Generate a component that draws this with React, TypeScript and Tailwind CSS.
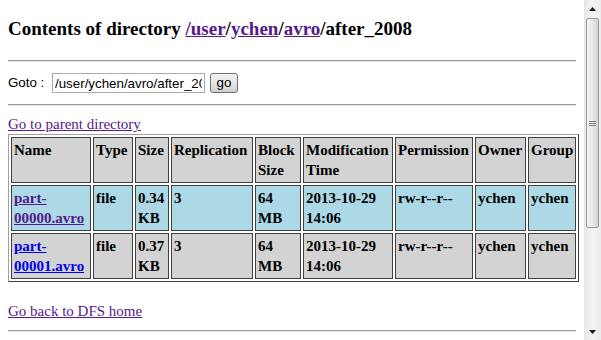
import { Fragment } from 'react'

const columns = [
  'Name',
  'Type',
  'Size',
  'Replication',
  'Block Size',
  'Modification Time',
  'Permission',
  'Owner',
  'Group',
]

const files = [
  {
    name: 'part-00000.avro',
    size: '0.34 KB',
    visited: true,
    bg: 'bg-[#add8e6]',
  },
  {
    name: 'part-00001.avro',
    size: '0.37 KB',
    visited: false,
    bg: 'bg-[#d3d3d3]',
  },
]

function Rule({ className = '' }: { className?: string }) {
  return (
    <div className={`h-[2px] border-t border-b border-t-[#9a9a9a] border-b-[#e4e4e4] ${className}`} />
  )
}

function Cell({ bg, children }: { bg: string; children: React.ReactNode }) {
  return (
    <div className={`${bg} border border-[#404040] p-[2px] text-[15px] leading-[20px] font-bold text-black`}>
      {children}
    </div>
  )
}

function Scrollbar() {
  return (
    <div className="w-[17px] h-[340px] shrink-0 flex flex-col bg-gradient-to-r from-[#e6e6e6] via-[#f4f4f4] to-[#ececec]">
      <div className="h-[17px] flex items-center justify-center">
        <svg width="7" height="4" viewBox="0 0 7 4">
          <path d="M3.5 0 L7 4 L0 4 Z" fill="#1a1a1a" />
        </svg>
      </div>
      <div className="mx-[2px] mt-[1px] h-[210px] rounded-[2px] border border-[#9b9b9b] bg-gradient-to-r from-[#f4f4f4] via-[#e8e8e8] to-[#d3d3d3] flex items-center justify-center">
        <div className="flex flex-col gap-[1px]">
          <div className="w-[7px] h-[1px] bg-[#808080]" />
          <div className="w-[7px] h-[1px] bg-[#808080]" />
          <div className="w-[7px] h-[1px] bg-[#808080]" />
        </div>
      </div>
      <div className="flex-1" />
      <div className="h-[17px] flex items-center justify-center">
        <svg width="7" height="4" viewBox="0 0 7 4">
          <path d="M0 0 L7 0 L3.5 4 Z" fill="#1a1a1a" />
        </svg>
      </div>
    </div>
  )
}

export default function App() {
  const link = 'text-[#551a8b] underline'

  return (
    <div className="w-[601px] h-[340px] overflow-hidden flex bg-white">
      <div className="w-[584px] shrink-0 px-2 pt-[18px] font-['Liberation_Serif',serif] text-black">
        <h3 className="text-[19px] leading-[22px] font-bold whitespace-nowrap">
          Contents of directory <a className={link}>/</a>
          <a className={link}>user</a>/<a className={link}>ychen</a>/<a className={link}>avro</a>
          /after_2008
        </h3>

        <Rule className="mt-[20px]" />

        <form className="mt-[11px] flex items-center h-[20px] font-['Liberation_Sans',Arial,sans-serif] text-[13.33px]">
          <span className="w-[36px] shrink-0 whitespace-nowrap">Goto :</span>
          <input
            readOnly
            value="/user/ychen/avro/after_2008"
            className="ml-[8px] w-[153px] h-[20px] border border-[#a5acb5] px-[2px] text-[13.33px] text-black outline-none"
          />
          <button
            type="button"
            className="ml-[5px] w-[28px] h-[20px] rounded-[3px] border border-[#707070] bg-gradient-to-b from-[#f2f2f2] via-[#e6e6e6] to-[#cfcfcf] text-[13.33px] leading-[16px] text-black"
          >
            go
          </button>
        </form>

        <Rule className="mt-[11px]" />

        <div className="mt-[8px] text-[15px] leading-[20px]">
          <a className={link}>Go to parent directory</a>
        </div>

        <div className="w-fit grid grid-cols-[80px_40px_34px_82px_46px_90px_78px_51px_48px] gap-[2px] p-[2px] border border-t-[#a0a0a0] border-l-[#a0a0a0] border-r-[#404040] border-b-[#404040]">
          {columns.map((c) => (
            <Cell key={c} bg="bg-[#d3d3d3]">
              {c}
            </Cell>
          ))}
          {files.map((f) => (
            <Fragment key={f.name}>
              <Cell bg={f.bg}>
                <a className={f.visited ? 'text-[#551a8b] underline' : 'text-[#0000ee] underline'}>
                  {f.name}
                </a>
              </Cell>
              <Cell bg={f.bg}>file</Cell>
              <Cell bg={f.bg}>{f.size}</Cell>
              <Cell bg={f.bg}>3</Cell>
              <Cell bg={f.bg}>64 MB</Cell>
              <Cell bg={f.bg}>2013-10-29 14:06</Cell>
              <Cell bg={f.bg}>rw-r--r--</Cell>
              <Cell bg={f.bg}>ychen</Cell>
              <Cell bg={f.bg}>ychen</Cell>
            </Fragment>
          ))}
        </div>

        <div className="mt-[19px] text-[15px] leading-[20px]">
          <a className={link}>Go back to DFS home</a>
        </div>

        <Rule className="mt-[9px]" />
      </div>
      <Scrollbar />
    </div>
  )
}
